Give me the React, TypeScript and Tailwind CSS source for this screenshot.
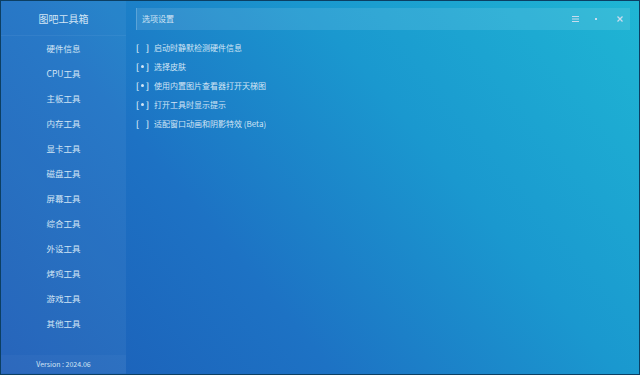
const menu = ['硬件信息', 'CPU工具', '主板工具', '内存工具', '显卡工具', '磁盘工具', '屏幕工具', '综合工具', '外设工具', '烤鸡工具', '游戏工具', '其他工具'];

const options = [
    { on: false, label: '启动时静默检测硬件信息' },
    { on: true, label: '选择皮肤' },
    { on: true, label: '使用内置图片查看器打开天梯图' },
    { on: true, label: '打开工具时显示提示' },
    { on: false, label: '适配窗口动画和阴影特效 (Beta)' },
];

function App() {
    return (
        <div
            className="w-[640px] h-[375px] flex border border-[#0c3f63] bg-[linear-gradient(50deg,#1c5cb6_0%,#1d72c4_35%,#1a98cf_65%,#1fb6d4_100%)] text-[#d2e5f5] text-[8px] overflow-hidden"
            style={{ fontFamily: '"Noto Sans CJK SC", "Noto Sans", sans-serif' }}
        >
            {/* sidebar */}
            <div className="w-[125px] flex flex-col bg-white/5">
                <div className="h-[35px] flex items-center justify-center text-[10px] border-b border-white/5">图吧工具箱</div>
                <div className="flex-1 flex flex-col items-center text-[8.5px]">
                    {menu.map((m) => (
                        <div key={m} className="h-[25px] flex items-center">{m}</div>
                    ))}
                </div>
                <div className="h-[18px] flex items-center justify-center text-[7px] bg-white/[0.03] mb-[1px]">Version : 2024.06</div>
            </div>

            {/* main */}
            <div className="flex-1 flex flex-col pl-[10px] pr-[9px]">
                <div className="mt-[7px] h-[22px] flex items-center bg-white/10 border-l border-white/20 pl-[5px]">
                    <span className="flex-1">选项设置</span>
                    <div className="flex items-center pr-[7px] text-[#c8dcee]">
                        <svg width="7" height="6" viewBox="0 0 7 6" fill="currentColor">
                            <rect y="0" width="7" height="1" />
                            <rect y="2.5" width="7" height="1" />
                            <rect y="5" width="7" height="1" />
                        </svg>
                        <div className="w-[2px] h-[2px] bg-current ml-[16px]" />
                        <svg width="6" height="6" viewBox="0 0 6 6" stroke="currentColor" strokeWidth="1.3" className="ml-[20px]">
                            <path d="M0.5 0.5 L5.5 5.5 M5.5 0.5 L0.5 5.5" />
                        </svg>
                    </div>
                </div>
                <div className="flex flex-col mt-[8px]">
                    {options.map((o) => (
                        <div key={o.label} className="h-[19px] flex items-center">
                            <span className="w-[13px] flex items-center justify-between font-bold">
                                <span>[</span>
                                {o.on && <span className="w-[3px] h-[3px] rounded-full bg-current" />}
                                <span>]</span>
                            </span>
                            <span className="ml-[5px]">{o.label}</span>
                        </div>
                    ))}
                </div>
            </div>
        </div>
    );
}

export default App;
